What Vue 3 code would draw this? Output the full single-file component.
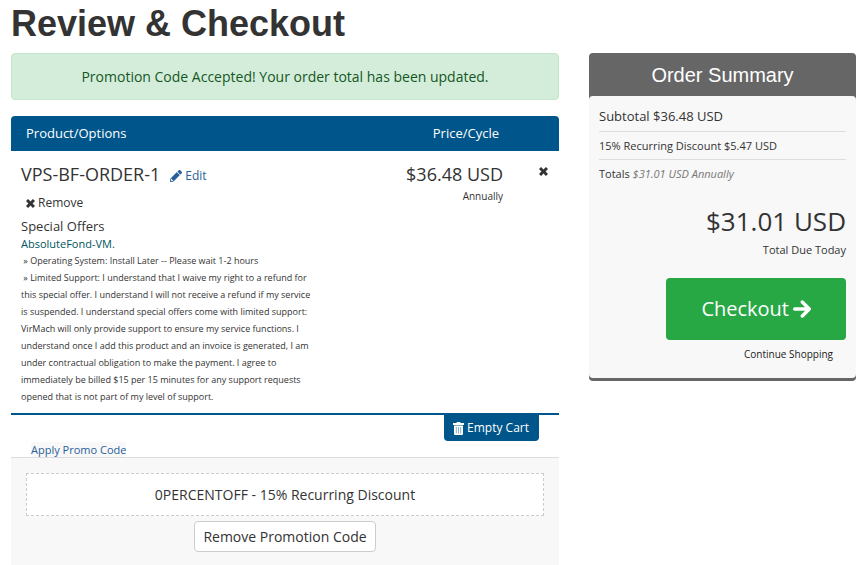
<script setup>
import { ref } from 'vue'

const detailLines = ref([
  'Operating System: Install Later -- Please wait 1-2 hours',
  'Limited Support: I understand that I waive my right to a refund for this special offer. I understand I will not receive a refund if my service is suspended. I understand special offers come with limited support: VirMach will only provide support to ensure my service functions. I understand once I add this product and an invoice is generated, I am under contractual obligation to make the payment. I agree to immediately be billed $15 per 15 minutes for any support requests opened that is not part of my level of support.',
])
</script>

<template>
  <main class="page">
    <h1>Review &amp; Checkout</h1>
    <div class="columns">
      <section class="cart">
        <div class="alert" role="status">Promotion Code Accepted! Your order total has been updated.</div>

        <table class="items">
          <thead>
            <tr>
              <th class="col-product">Product/Options</th>
              <th class="col-price">Price/Cycle</th>
              <th class="col-remove"></th>
            </tr>
          </thead>
          <tbody>
            <tr>
              <td class="product">
                <div class="name-row">
                  <span class="name">VPS-BF-ORDER-1</span>
                  <a class="edit" href="#">
                    <svg class="icon-pencil" viewBox="0 0 512 512" aria-hidden="true">
                      <path fill="currentColor" d="M498 142l-46 46c-5 5-13 5-17 0L324 77c-5-5-5-12 0-17l46-46c19-19 49-19 68 0l60 60c19 19 19 49 0 68zm-214-42L22 362 0 484c-3 16 12 30 28 28l122-22 262-262c5-5 5-13 0-17L301 100c-4-5-12-5-17 0zM88 424h48v36l-64 12-32-32 12-64h36v48z" />
                    </svg>
                    Edit
                  </a>
                </div>
                <button class="remove" type="button">
                  <svg class="icon-times" viewBox="0 0 10 10" aria-hidden="true">
                    <path fill="currentColor" d="M2.300 0 5 2.700 7.700 0 10 2.300 7.300 5 10 7.700 7.700 10 5 7.300 2.300 10 0 7.700 2.700 5 0 2.300Z" />
                  </svg>
                  Remove
                </button>
                <div class="group">Special Offers</div>
                <div class="domain">AbsoluteFond-VM.</div>
                <div class="details">
                  <div v-for="line in detailLines" :key="line">&nbsp;» {{ line }}</div>
                </div>
              </td>
              <td class="price">
                <div class="amount">$36.48 USD</div>
                <div class="cycle">Annually</div>
              </td>
              <td class="remove-cell">
                <button class="close" type="button" aria-label="Remove item">
                  <svg class="icon-times" viewBox="0 0 10 10" aria-hidden="true">
                    <path fill="currentColor" d="M2.300 0 5 2.700 7.700 0 10 2.300 7.300 5 10 7.700 7.700 10 5 7.300 2.300 10 0 7.700 2.700 5 0 2.300Z" />
                  </svg>
                </button>
              </td>
            </tr>
          </tbody>
        </table>

        <div class="empty-row">
          <button class="empty" type="button">
            <svg class="icon-trash" viewBox="0 0 11 13" aria-hidden="true">
              <path fill="currentColor" d="M0 1h3.300L4 0h3l.7 1H11v2H0ZM1 3.500h9v8.300q0 1.200-1.200 1.200H2.200Q1 13 1 11.800Z" />
              <path stroke="#00568a" stroke-opacity=".6" stroke-width=".8" d="M3.300 5v6.500M5.500 5v6.500M7.700 5v6.500" />
            </svg>
            Empty Cart
          </button>
        </div>

        <div class="tabs"><a href="#">Apply Promo Code</a></div>
        <div class="promo">
          <div class="code">0PERCENTOFF - 15% Recurring Discount</div>
          <button class="remove-promo" type="button">Remove Promotion Code</button>
        </div>
      </section>

      <aside class="summary">
        <h2>Order Summary</h2>
        <div class="summary-body">
          <div class="subtotal">Subtotal $36.48 USD</div>
          <div class="discount">15% Recurring Discount $5.47 USD</div>
          <div class="totals">Totals <em>$31.01 USD Annually</em></div>
          <div class="due">$31.01 USD</div>
          <div class="due-label">Total Due Today</div>
          <button class="checkout" type="button">
            Checkout
            <svg class="icon-arrow" viewBox="0 0 18 18" aria-hidden="true">
              <path fill="none" stroke="currentColor" stroke-width="3.400" stroke-linecap="round" stroke-linejoin="round" d="M1.700 9H15.500M9.300 2l7 7-7 7" />
            </svg>
          </button>
          <a class="continue" href="#">Continue Shopping</a>
        </div>
      </aside>
    </div>
  </main>
</template>

<style>
body {
  background: #fff;
}
</style>

<style scoped>
.page {
  padding: 4px 9px 0 11px;
  font: 14px/20px "Open Sans", sans-serif;
  color: #333;
}
.page *,
.page {
  box-sizing: border-box;
}
button {
  font: inherit;
  color: inherit;
  border: 0;
  background: none;
  padding: 0;
  cursor: pointer;
}
a {
  color: #28609a;
  text-decoration: none;
}
svg {
  flex: none;
}
h1 {
  margin: 0 0 9px;
  font: bold 36px/40px "Liberation Sans", Arial, sans-serif;
}
.columns {
  display: grid;
  grid-template-columns: 548fr 267fr;
  gap: 30px;
  align-items: start;
}
.alert {
  padding: 13px 20px 12px;
  border: 1px solid #c3e6cb;
  border-radius: 4px;
  background: #d4edda;
  color: #155724;
  text-align: center;
  margin-bottom: 16px;
}
.items {
  width: 100%;
  border-spacing: 0;
  border-bottom: 2px solid #00568a;
  table-layout: fixed;
}
th {
  height: 35px;
  padding: 0 0 2px;
  background: #00568a;
  color: #fff;
  font-size: 13px;
  font-weight: 400;
}
.col-product {
  padding-left: 15px;
  text-align: left;
  border-radius: 4px 0 0 0;
}
.col-price {
  width: 190px;
  padding-right: 4px;
  text-align: right;
}
.col-remove {
  width: 56px;
  border-radius: 0 4px 0 0;
}
td {
  padding: 7px 0 8px;
  vertical-align: top;
}
.product {
  padding-left: 10px;
}
.name-row {
  display: flex;
  align-items: center;
  gap: 10px;
  height: 32px;
}
.name {
  font-size: 18px;
}
.edit {
  display: flex;
  align-items: center;
  gap: 3px;
  padding-top: 3px;
  font-size: 12px;
}
.icon-pencil {
  width: 12px;
  height: 12px;
}
.icon-times {
  width: 9px;
  height: 9px;
}
.remove {
  display: flex;
  align-items: center;
  gap: 3px;
  height: 26px;
  padding-left: 5px;
  font-size: 12px;
}
.group {
  font-size: 13px;
  line-height: 20px;
}
.domain {
  color: #005560;
  font-size: 11px;
  line-height: 16px;
}
.details {
  max-width: 292px;
  font-size: 9px;
  line-height: 17px;
}
.price {
  text-align: right;
}
.amount {
  font-size: 18px;
  line-height: 32px;
}
.cycle {
  font-size: 10px;
  line-height: 12px;
}
.remove-cell {
  text-align: center;
  padding-left: 24px;
}
.close {
  line-height: 26px;
}
.empty-row {
  display: flex;
  justify-content: flex-end;
  padding-right: 20px;
}
.empty {
  display: flex;
  align-items: center;
  gap: 3px;
  height: 26px;
  padding: 0 10px 0 9px;
  border-radius: 0 0 4px 4px;
  background: #00568a;
  color: #fff;
  font-size: 12px;
}
.icon-trash {
  width: 11px;
  height: 13px;
}
.tabs {
  display: flex;
  padding: 1px 20px 0;
  border-bottom: 1px solid #ddd;
}
.tabs a {
  background: #f8f8f8;
  font-size: 11px;
  line-height: 15px;
}
.promo {
  display: flex;
  flex-direction: column;
  align-items: center;
  gap: 5px;
  padding: 15px 15px 20px;
  background: #f8f8f8;
}
.code {
  width: 100%;
  padding: 11px 11px 10px;
  border: 1px dashed #ccc;
  background: #fff;
  line-height: 20px;
  text-align: center;
}
.remove-promo {
  padding: 5px 8px 4px;
  border: 1px solid #ccc;
  border-radius: 4px;
  background: #fff;
}
.summary {
  border-bottom: 3px solid #666;
  border-radius: 4px;
  background: #666;
}
h2 {
  margin: 0;
  padding-top: 1px;
  color: #fff;
  font: 20px/42px "Liberation Sans", Arial, sans-serif;
  text-align: center;
}
.summary-body {
  display: flex;
  flex-direction: column;
  padding: 8px 10px 16px;
  border-radius: 4px;
  background: #f8f8f8;
}
.subtotal {
  padding: 2px 0 5px;
  border-bottom: 1px solid #ddd;
  font-size: 13px;
}
.discount {
  padding: 4px 0 3px;
  border-bottom: 1px solid #ddd;
  font-size: 11px;
}
.totals {
  padding-top: 4px;
  font-size: 11px;
}
.totals em {
  color: #777;
}
.due {
  margin-top: 17px;
  font-size: 26px;
  line-height: 40px;
  text-align: right;
}
.due-label {
  padding-top: 1px;
  font-size: 11px;
  line-height: 16px;
  text-align: right;
}
.checkout {
  display: flex;
  align-items: center;
  align-self: flex-end;
  gap: 4px;
  height: 62px;
  margin-top: 20px;
  padding: 0 35px;
  border-radius: 4px;
  background: #28a745;
  color: #fff;
  font-size: 20px;
}
.icon-arrow {
  width: 18px;
  height: 18px;
}
.continue {
  align-self: flex-end;
  margin-top: 6px;
  padding-right: 13px;
  color: #222;
  font-size: 10px;
  line-height: 16px;
}
</style>
